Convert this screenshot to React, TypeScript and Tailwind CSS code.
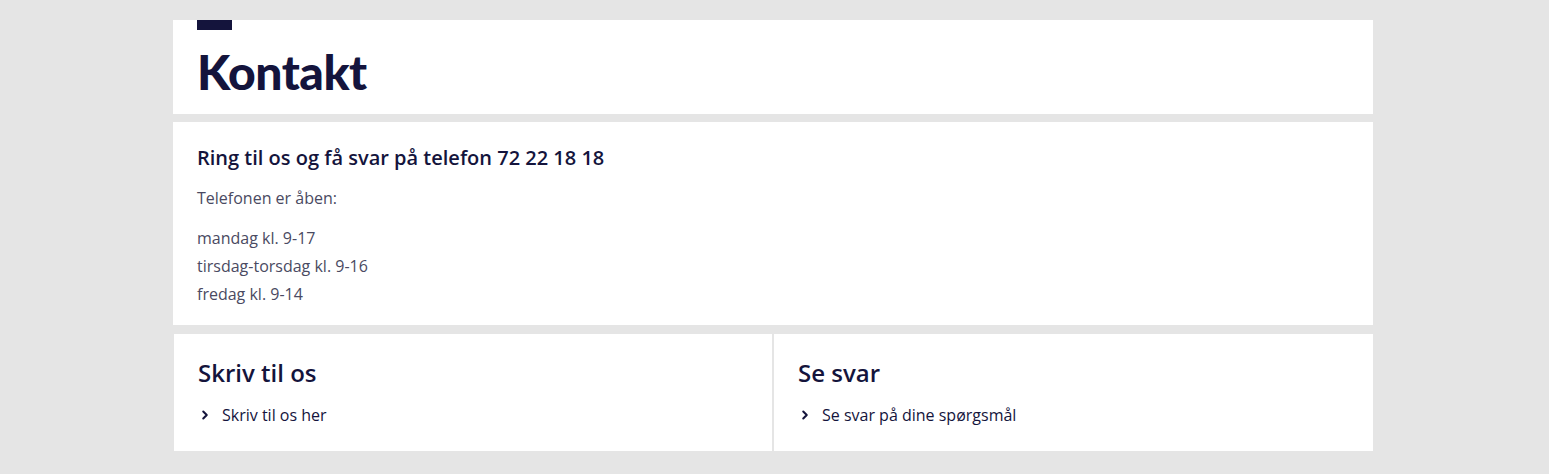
import { ChevronRight } from 'lucide-react'

const body = { fontFamily: '"Open Sans", Lato, sans-serif' }
const display = { fontFamily: 'Lato, "Open Sans", sans-serif' }

export default function App() {
  return (
    <main className="min-h-screen bg-[#e5e5e5] pt-5 pb-6" style={body}>
      <div className="w-[1200px] ml-[173px] flex flex-col">
        {/* Header */}
        <div className="bg-white px-6 h-[94px]">
          <div className="w-[35px] h-[10px] bg-[#14143c]" />
          <h1 className="mt-[14px] text-[48px] leading-[56px] font-black text-[#14143c] tracking-[-0.5px]" style={display}>Kontakt</h1>
        </div>

        {/* Phone */}
        <div className="mt-[8px] bg-white px-6 pt-[24px] h-[203px]">
          <h2 className="text-[20px] leading-[24px] font-semibold text-[#14143c]">
            Ring til os og få svar på telefon 72 22 18 18
          </h2>
          <p className="mt-[16px] text-[16px] leading-[24px] text-[#4a4a62]">Telefonen er åben:</p>
          <div className="mt-[14px] text-[16px] leading-[28px] text-[#4a4a62]">
            <p>mandag kl. 9-17</p>
            <p>tirsdag-torsdag kl. 9-16</p>
            <p>fredag kl. 9-14</p>
          </div>
        </div>

        {/* Links */}
        <div className="mt-[9px] flex gap-[2px] pl-px h-[117px]">
          <div className="w-[598px] bg-white px-6 pt-[24px]">
            <h3 className="text-[24px] leading-[30px] font-semibold text-[#14143c]">Skriv til os</h3>
            <a className="mt-[15px] flex items-center gap-[10px] text-[16px] text-[#14143c]">
              <ChevronRight className="w-[14px] h-[14px]" strokeWidth={3.5} />
              Skriv til os her
            </a>
          </div>
          <div className="flex-1 bg-white px-6 pt-[24px]">
            <h3 className="text-[24px] leading-[30px] font-semibold text-[#14143c]">Se svar</h3>
            <a className="mt-[15px] flex items-center gap-[10px] text-[16px] text-[#14143c]">
              <ChevronRight className="w-[14px] h-[14px]" strokeWidth={3.5} />
              Se svar på dine spørgsmål
            </a>
          </div>
        </div>
      </div>
    </main>
  )
}
